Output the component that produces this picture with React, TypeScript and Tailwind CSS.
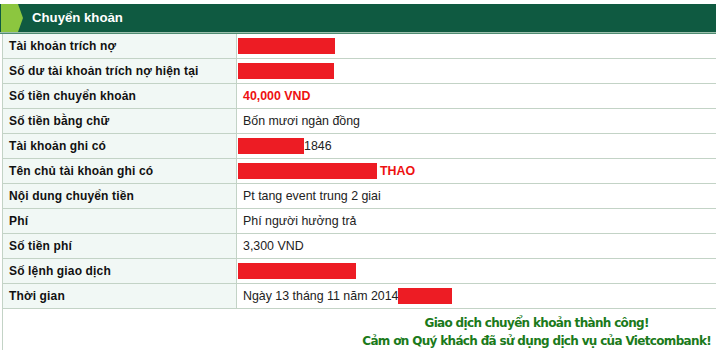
import React from "react";

const Red = ({ w }: { w: number }) => (
  <span className="inline-block h-[16px] bg-[#ed1c24]" style={{ width: w }} />
);

type Row = { label: string; value: React.ReactNode };

const rows: Row[] = [
  { label: "Tài khoản trích nợ", value: <Red w={97} /> },
  { label: "Số dư tài khoản trích nợ hiện tại", value: <Red w={96} /> },
  {
    label: "Số tiền chuyển khoản",
    value: <span className="font-bold text-[#ee1111] ml-[5px]">40,000 VND</span>,
  },
  { label: "Số tiền bằng chữ", value: <span className="ml-[5px]">Bốn mươi ngàn đồng</span> },
  {
    label: "Tài khoản ghi có",
    value: (
      <span className="flex items-center">
        <Red w={66} />
        <span>1846</span>
      </span>
    ),
  },
  {
    label: "Tên chủ tài khoản ghi có",
    value: (
      <span className="flex items-center">
        <Red w={139} />
        <span className="font-bold text-[#ee1111] ml-[3px]">THAO</span>
      </span>
    ),
  },
  { label: "Nội dung chuyển tiền", value: <span className="ml-[5px]">Pt tang event trung 2 giai</span> },
  { label: "Phí", value: <span className="ml-[5px]">Phí người hưởng trả</span> },
  { label: "Số tiền phí", value: <span className="ml-[5px]">3,300 VND</span> },
  { label: "Số lệnh giao dịch", value: <Red w={118} /> },
  {
    label: "Thời gian",
    value: (
      <span className="flex items-center ml-[5px]">
        <span>Ngày 13 tháng 11 năm 2014</span>
        <Red w={54} />
      </span>
    ),
  },
];

export default function App() {
  return (
    <div className="w-[716px] h-[350px] bg-white pt-[4px] overflow-hidden" style={{ fontFamily: "Arial, 'Liberation Sans', sans-serif" }}>
      <div className="relative h-[28px] bg-[#0f5a41] flex items-center">
        <svg className="absolute left-[1px] top-0" width="22" height="28" viewBox="0 0 22 28">
          <polygon points="0,0 17,0 22,14 17,28 0,28" fill="#8cc63f" />
        </svg>
        <span className="ml-[32px] text-white font-bold text-[13.2px]" style={{ fontFamily: "'Liberation Sans', Arial, sans-serif" }}>
          Chuyển khoản
        </span>
      </div>
      <div className="h-[1px] bg-[#9cc0ad]" />
      <div className="h-[1px] bg-[#4f8c72]" />
      <div className="ml-[2px] border-l border-[#c3d3c6] h-[320px]">
        {rows.map((r, i) => (
          <div key={i} className="flex h-[25px] border-b border-[#c3d3c6]">
            <div
              className="w-[234px] bg-[#f1f8f5] border-r border-[#c3d3c6] flex items-center pl-[6px] text-[12px] font-bold text-[#111]"
              style={{ fontFamily: "'Liberation Sans', Arial, sans-serif", letterSpacing: "0.15px" }}
            >
              {r.label}
            </div>
            <div className="flex-1 flex items-center text-[12.4px] text-[#222] pl-[1px]">{r.value}</div>
          </div>
        ))}
        <div
          className="flex justify-end pr-[5px] pt-[5px]"
          style={{ fontFamily: "'DejaVu Sans', Verdana, sans-serif", letterSpacing: "-0.67px" }}
        >
          <div className="text-center text-[12px] font-bold text-[#1b7a1b] leading-[18px]">
            <div>Giao dịch chuyển khoản thành công!</div>
            <div>Cảm ơn Quý khách đã sử dụng dịch vụ của Vietcombank!</div>
          </div>
        </div>
      </div>
    </div>
  );
}
